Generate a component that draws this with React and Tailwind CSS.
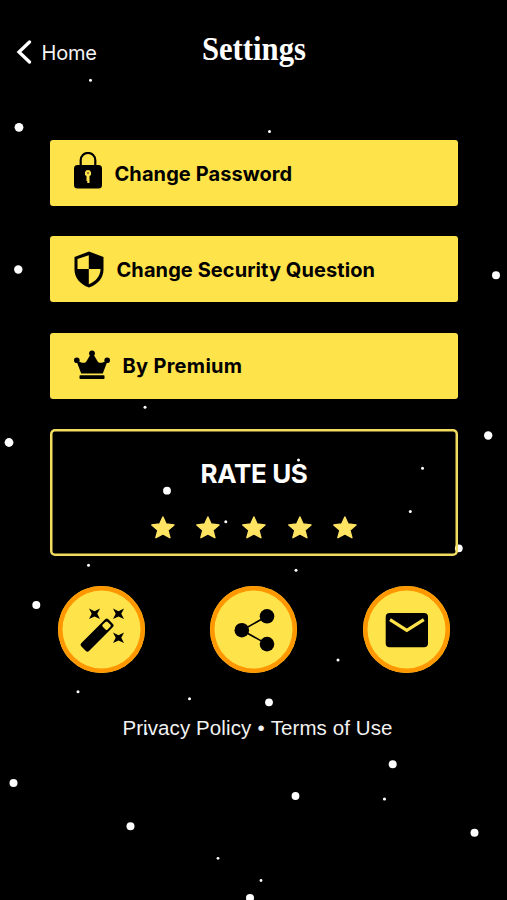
// Settings screen: menu buttons, rating box, round actions and legal links

const specks = [
  { x: 90.5, y: 80.3, r: 1.5 },
  { x: 19, y: 127.3, r: 4.4 },
  { x: 269.5, y: 131.5, r: 1.5 },
  { x: 18.3, y: 269.5, r: 4.2 },
  { x: 496, y: 275.3, r: 4 },
  { x: 145, y: 407.3, r: 1.5 },
  { x: 9, y: 442.5, r: 4.4 },
  { x: 488.2, y: 435.5, r: 4.2 },
  { x: 298.5, y: 460, r: 1.5 },
  { x: 422.5, y: 468.3, r: 1.5 },
  { x: 167, y: 490.7, r: 3.9 },
  { x: 410.3, y: 511.5, r: 1.5 },
  { x: 225.8, y: 521.7, r: 1.5 },
  { x: 458.8, y: 548.3, r: 3.9 },
  { x: 88.5, y: 565.3, r: 1.5 },
  { x: 296, y: 570.3, r: 1.5 },
  { x: 36.3, y: 605, r: 4 },
  { x: 338, y: 660, r: 1.5 },
  { x: 78, y: 691.7, r: 1.5 },
  { x: 189.5, y: 698.7, r: 1.5 },
  { x: 269, y: 702.3, r: 3.9 },
  { x: 146, y: 733.5, r: 1.5 },
  { x: 392.7, y: 764.2, r: 4 },
  { x: 13.5, y: 783, r: 4 },
  { x: 295.5, y: 796, r: 3.9 },
  { x: 384.5, y: 799, r: 1.6 },
  { x: 130.5, y: 826.3, r: 4 },
  { x: 474.5, y: 832.8, r: 4 },
  { x: 218, y: 858.3, r: 1.4 },
  { x: 261, y: 880.5, r: 1.4 },
  { x: 250, y: 898, r: 4 },
];

const LockIcon = () => (
  <svg className="mb-[5px]" width="28" height="37" viewBox="0 0 28 37">
    <path d="M6.7 15V8.2a7.3 7.3 0 0 1 14.6 0V15" fill="none" stroke="#000" strokeWidth="2.2" />
    <rect y="13" width="28" height="23.5" rx="3.5" />
    <path d="M14 18a3.2 3.2 0 0 1 1.5 6v7h-2.2v-2h-.8v-5A3.2 3.2 0 0 1 14 18Z" fill="#ffe34a" />
    <circle cx="14" cy="21" r=".8" />
  </svg>
);

const ShieldIcon = () => (
  <svg width="30" height="37" viewBox="0 0 30 37">
    <path d="M15 .5 29.5 6v12.5c0 8-5.5 15-14.5 18C6 33.5.5 26.5.5 18.5V6Z" />
    <path d="M14.8 4.3V18H3.5V8Z" fill="#ffe34a" />
    <path d="M14.8 18H26.5c0 6.5-4.5 12.5-11.7 15.2Z" fill="#ffe34a" />
  </svg>
);

const CrownIcon = () => (
  <svg className="mb-[1px]" width="36" height="30" viewBox="0 0 36 30">
    <circle cx="18" cy="3.3" r="2.9" />
    <circle cx="2.8" cy="10.3" r="2.8" />
    <circle cx="33.2" cy="10.3" r="2.8" />
    <path d="M2.5 11 4 10.8c3 2.2 6 2.7 8 1.2L16.8 4h2.4L24 12c2 1.500 5 1 8-1.200l1.500.2L28.8 23.500H7.200Z" />
    <rect x="5.5" y="25.3" width="25" height="3.7" rx=".8" />
  </svg>
);

const WandIcon = () => (
  <svg width="87" height="87" viewBox="0 0 87 87">
    <g transform="translate(.7 0) rotate(-45 38.5 49)">
      <rect x="19.2" y="43.5" width="38.3" height="11" rx="2.2" />
      <rect x="48.3" y="45.6" width="6.8" height="6.8" rx="1.5" fill="#ffe34a" />
    </g>
    <path d="m31 22.5 5.5 2.7 5.5-2.7-2.7 5.3L42 33.1l-5.5-2.5-5.5 2.5 2.7-5.3Z" />
    <path d="m55 22.5 5.5 2.7 5.5-2.7-2.7 5.3L66 33.1l-5.5-2.5-5.5 2.5 2.7-5.3Z" />
    <path d="m55 46.5 5.5 2.7 5.5-2.7-2.7 5.3L66 57.1l-5.5-2.5-5.5 2.5 2.7-5.3Z" />
  </svg>
);

const ShareIcon = () => (
  <svg width="87" height="87" viewBox="0 0 87 87">
    <path d="M57 30.3 32 44.2l25 13.9" fill="none" stroke="#000" strokeWidth="1.6" />
    <circle cx="31.8" cy="44.2" r="7.3" />
    <circle cx="57" cy="30.3" r="7.3" />
    <circle cx="57" cy="58.1" r="7.3" />
  </svg>
);

const MailIcon = () => (
  <svg width="87" height="87" viewBox="0 0 87 87">
    <rect x="22.7" y="27" width="42.3" height="34.3" rx="4" />
    <path d="M27 33.6 43.8 44.4l17-10.8" fill="none" stroke="#ffe34a" strokeWidth="3.2" />
  </svg>
);

const Star = () => (
  <svg width="26" height="26" viewBox="0 0 26 26">
    <path
      d="m12.9 3 3.200 7 7.900.9-6.100 5.200 2 7.600-7-3.700-7 3.700 2-7.600-6.100-5.200 7.900-.9Z"
      fill="#ffe463"
      stroke="#ffe463"
      strokeWidth="1.4"
      strokeLinejoin="round"
    />
  </svg>
);

const menu = [
  { label: "Change Password", icon: LockIcon, text: "tracking-[0.08px]" },
  { label: "Change Security Question", icon: ShieldIcon, text: "tracking-[0.08px]" },
  { label: "By Premium", icon: CrownIcon, text: "tracking-[0.3px]" },
];

const actions = [
  { label: "Effects", icon: WandIcon },
  { label: "Share", icon: ShareIcon },
  { label: "Mail", icon: MailIcon },
];

export default function App() {
  return (
    <div className="relative h-[900px] w-[507px] overflow-hidden bg-black font-['Inter',sans-serif] text-white">
      <svg className="absolute inset-0" width="507" height="900">
        {specks.map((s, i) => (
          <circle key={i} cx={s.x} cy={s.y} r={s.r} fill="#fff" />
        ))}
      </svg>

      <div className="relative flex flex-col">
        <header className="grid h-[140px] grid-cols-[1fr_auto_1fr] items-start pt-[30px]">
          <button className="flex h-[44px] items-center gap-[9.5px] pl-[16px] text-[20px] tracking-[-0.2px] text-[#f4f4f4]">
            <svg width="16" height="24" viewBox="0 0 16 24">
              <path d="M13.5 2 3 12l10.5 10" fill="none" stroke="#fff" strokeWidth="3.3" strokeLinecap="round" />
            </svg>
            <span className="pt-[2px]">Home</span>
          </button>
          <h1 className="flex h-[40px] w-[104px] items-center justify-center whitespace-nowrap font-['Liberation_Serif',serif] text-[33px] font-bold">
            <span className="inline-block scale-x-[0.93]">Settings</span>
          </h1>
        </header>

        <main className="flex flex-col pl-[50px] pr-[49px]">
          <div className="flex flex-col gap-[30.3px]">
            {menu.map(({ label, icon: Icon, text }) => (
              <button
                key={label}
                className={`flex h-[66px] items-center gap-[12.5px] rounded-[3px] bg-[#ffe34a] pl-[24px] text-[20px] font-bold text-black ${text}`}
              >
                <Icon />
                <span className="pt-[1px]">{label}</span>
              </button>
            ))}
          </div>

          <section className="mt-[30px] flex h-[127px] flex-col items-center rounded-[5px] pt-[28px] shadow-[inset_0_0_0_2.5px_#f2dc60]">
            <h2 className="text-[26px] font-bold leading-[34px] tracking-[-0.35px]">RATE US</h2>
            <div className="mt-[23px] flex gap-[19.6px]">
              {[0, 1, 2, 3, 4].map((n) => (
                <Star key={n} />
              ))}
            </div>
          </section>
        </main>

        <div className="mt-[30.5px] flex justify-between pl-[58px] pr-[57.5px]">
          {actions.map(({ label, icon: Icon }) => (
            <button
              key={label}
              aria-label={label}
              className="flex size-[87px] items-center justify-center rounded-full bg-[#ffe34a] shadow-[inset_0_0_0_4.5px_#ff9800]"
            >
              <Icon />
            </button>
          ))}
        </div>

        <footer className="mt-[40px] flex justify-center gap-[6px] pl-[8px] font-['Liberation_Sans',sans-serif] text-[20.5px] leading-[30px] tracking-[0.1px] text-[#f2f2f2]">
          <a>Privacy Policy</a>
          <span>•</span>
          <a>Terms of Use</a>
        </footer>
      </div>
    </div>
  );
}
